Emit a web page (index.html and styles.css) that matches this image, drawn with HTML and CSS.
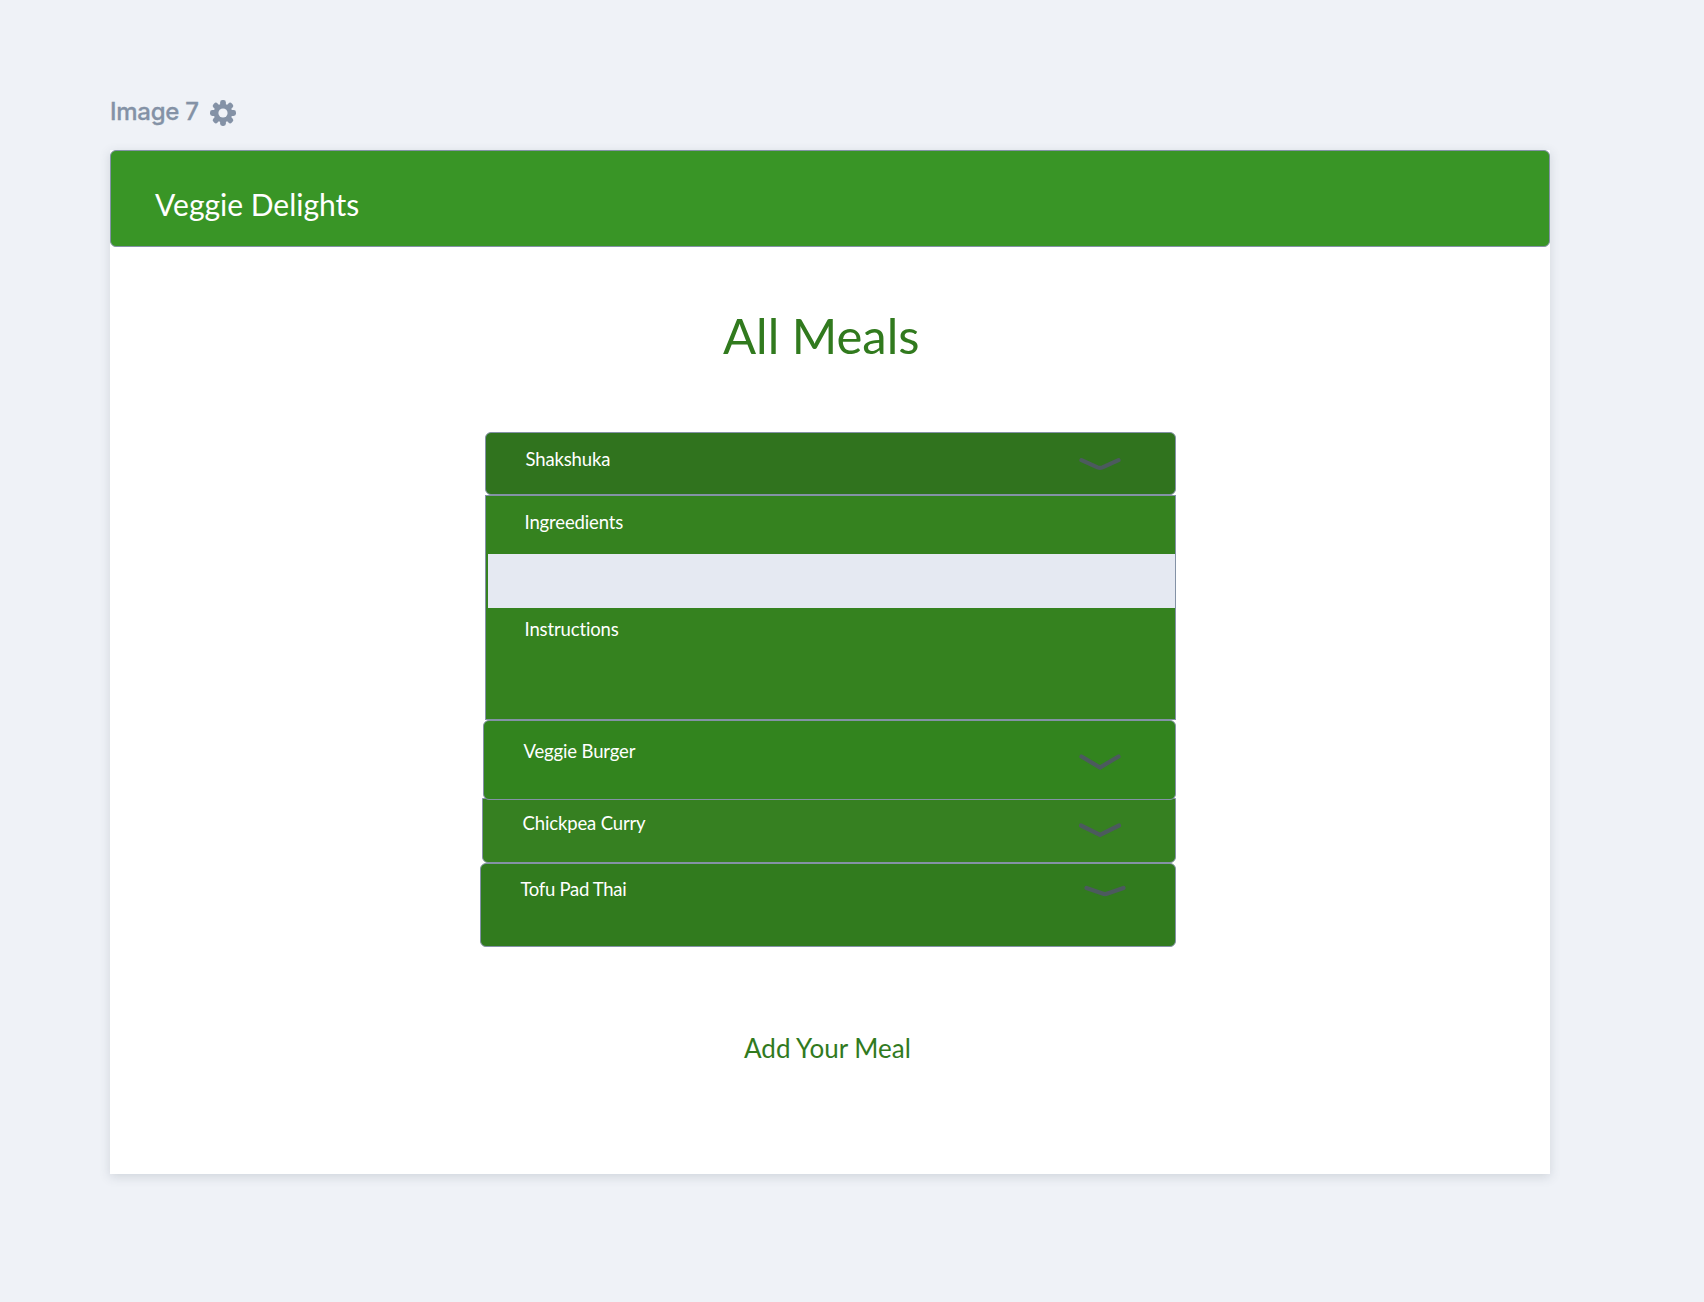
FILE: index.html
```html
<!DOCTYPE html>
<html lang="en">
<head>
<meta charset="utf-8">
<title>Veggie Delights</title>
<link rel="stylesheet" href="styles.css">
</head>
<body>
<div class="frame-label">
  <span class="frame-name">Image 7</span>
  <svg class="gear" viewBox="-13 -13 26 26" aria-hidden="true">
    <g fill="#8492a6">
      <g id="teeth"><rect x="-2.9" y="-13" width="5.8" height="26" rx="2.4"/><rect x="-13" y="-2.9" width="26" height="5.8" rx="2.4"/></g>
      <use href="#teeth" transform="rotate(45)"/>
      <circle r="9.3"/>
    </g>
    <circle r="4.6" fill="#eff2f7"/>
  </svg>
</div>
<main class="card">
  <header class="topbar"><span class="brand">Veggie Delights</span></header>
  <h1 class="title">All Meals</h1>
  <section class="meals">
    <div class="meal shakshuka"><span>Shakshuka</span>
      <svg class="chevron" width="42" height="14" viewBox="0 0 42 14"><path d="M2.5 3.2L18.5 10.4Q21 11.4 23.5 10.4L39.5 3.2"/></svg></div>
    <div class="details">
      <div class="detail ingredients">Ingreedients</div>
      <div class="blank"></div>
      <div class="detail instructions">Instructions</div>
    </div>
    <div class="meal burger"><span>Veggie Burger</span>
      <svg class="chevron" width="42" height="18" viewBox="0 0 42 18"><path d="M2.5 3.5L21 14.5L39.5 3.5"/></svg></div>
    <div class="meal curry"><span>Chickpea Curry</span>
      <svg class="chevron" width="42" height="16" viewBox="0 0 42 16"><path d="M2 3.5L21 12.8L40 3.5"/></svg></div>
    <div class="meal tofu"><span>Tofu Pad Thai</span>
      <svg class="chevron" width="42" height="14" viewBox="0 0 42 14"><path d="M2.5 3L18.5 8.6Q21 9.5 23.5 8.6L39.5 3"/></svg></div>
  </section>
  <a class="add">Add Your Meal</a>
</main>
</body>
</html>
```
FILE: styles.css
```css
* { box-sizing: border-box; }
body {
  margin: 0;
  min-height: 1302px;
  padding: 96px 154px 128px 110px;
  background: #eff2f7;
  font-family: Lato, "Liberation Sans", sans-serif;
  font-variant-ligatures: none;
}
.frame-label {
  display: flex;
  align-items: flex-start;
  height: 54px;
  color: #8492a6;
}
.frame-name {
  width: 100px;
  font: 500 24px/32px Inter, sans-serif;
  letter-spacing: -0.25px;
  -webkit-text-stroke: 0.3px #8492a6;
  white-space: nowrap;
}
.gear { width: 26px; height: 26px; margin-top: 4px; }
.card {
  display: flex;
  flex-direction: column;
  height: 1024px;
  background: #fff;
  box-shadow: 0 3px 10px rgba(60, 72, 88, 0.17);
}
.topbar {
  height: 97px;
  padding: 35px 44px 0;
  border: 1px solid #8492a6;
  border-radius: 6px;
  background: #399526;
}
.brand { display: block; font-size: 30px; line-height: 36px; color: #fff; }
.title {
  margin: 58px 0 0 613px;
  font-size: 49px;
  font-weight: 400;
  line-height: 60px;
  color: #317a1e;
}
.meals {
  display: flex;
  flex-direction: column;
  align-items: flex-end;
  width: 696px;
  margin: 67px 0 0 370px;
  color: #fff;
  font-size: 18.5px;
  letter-spacing: -0.14px;
  line-height: 26px;
}
.meal {
  display: flex;
  justify-content: space-between;
  align-items: flex-start;
  padding: 0 54.3px 0 39.5px;
  border: 1px solid #8492a6;
  border-radius: 6px;
}
.chevron { fill: none; stroke: #4c5a5e; stroke-width: 4.2; stroke-linecap: round; }
.shakshuka { width: 691px; height: 63px; padding-top: 13px; background: #30731e; }
.shakshuka .chevron { margin-top: 11px; }
.details {
  width: 691px;
  height: 225px;
  border: 1px solid #8492a6;
  background: #35821f;
}
.detail { padding-left: 38.5px; }
.ingredients { height: 58px; padding-top: 13px; }
.blank { height: 54px; margin-left: 1.5px; background: #e5e9f2; }
.instructions { padding-top: 8px; }
.burger { position: relative; z-index: 1; width: 693px; height: 80px; padding-top: 17px; background: #32841e; }
.burger .chevron { margin-top: 15px; }
.curry { width: 694px; height: 65px; margin-top: -2px; padding-top: 11px; border-radius: 0 0 6px 6px; background: #368021; }
.curry .chevron { margin-top: 12px; }
.tofu { width: 696px; height: 84px; padding: 12px 49px 0 39.5px; background: #317b1e; letter-spacing: -0.3px; }
.tofu .chevron { margin-top: 9px; }
.add {
  margin: 85px 0 0 634px;
  font-size: 26px;
  line-height: 32px;
  color: #317a1e;
}
```
